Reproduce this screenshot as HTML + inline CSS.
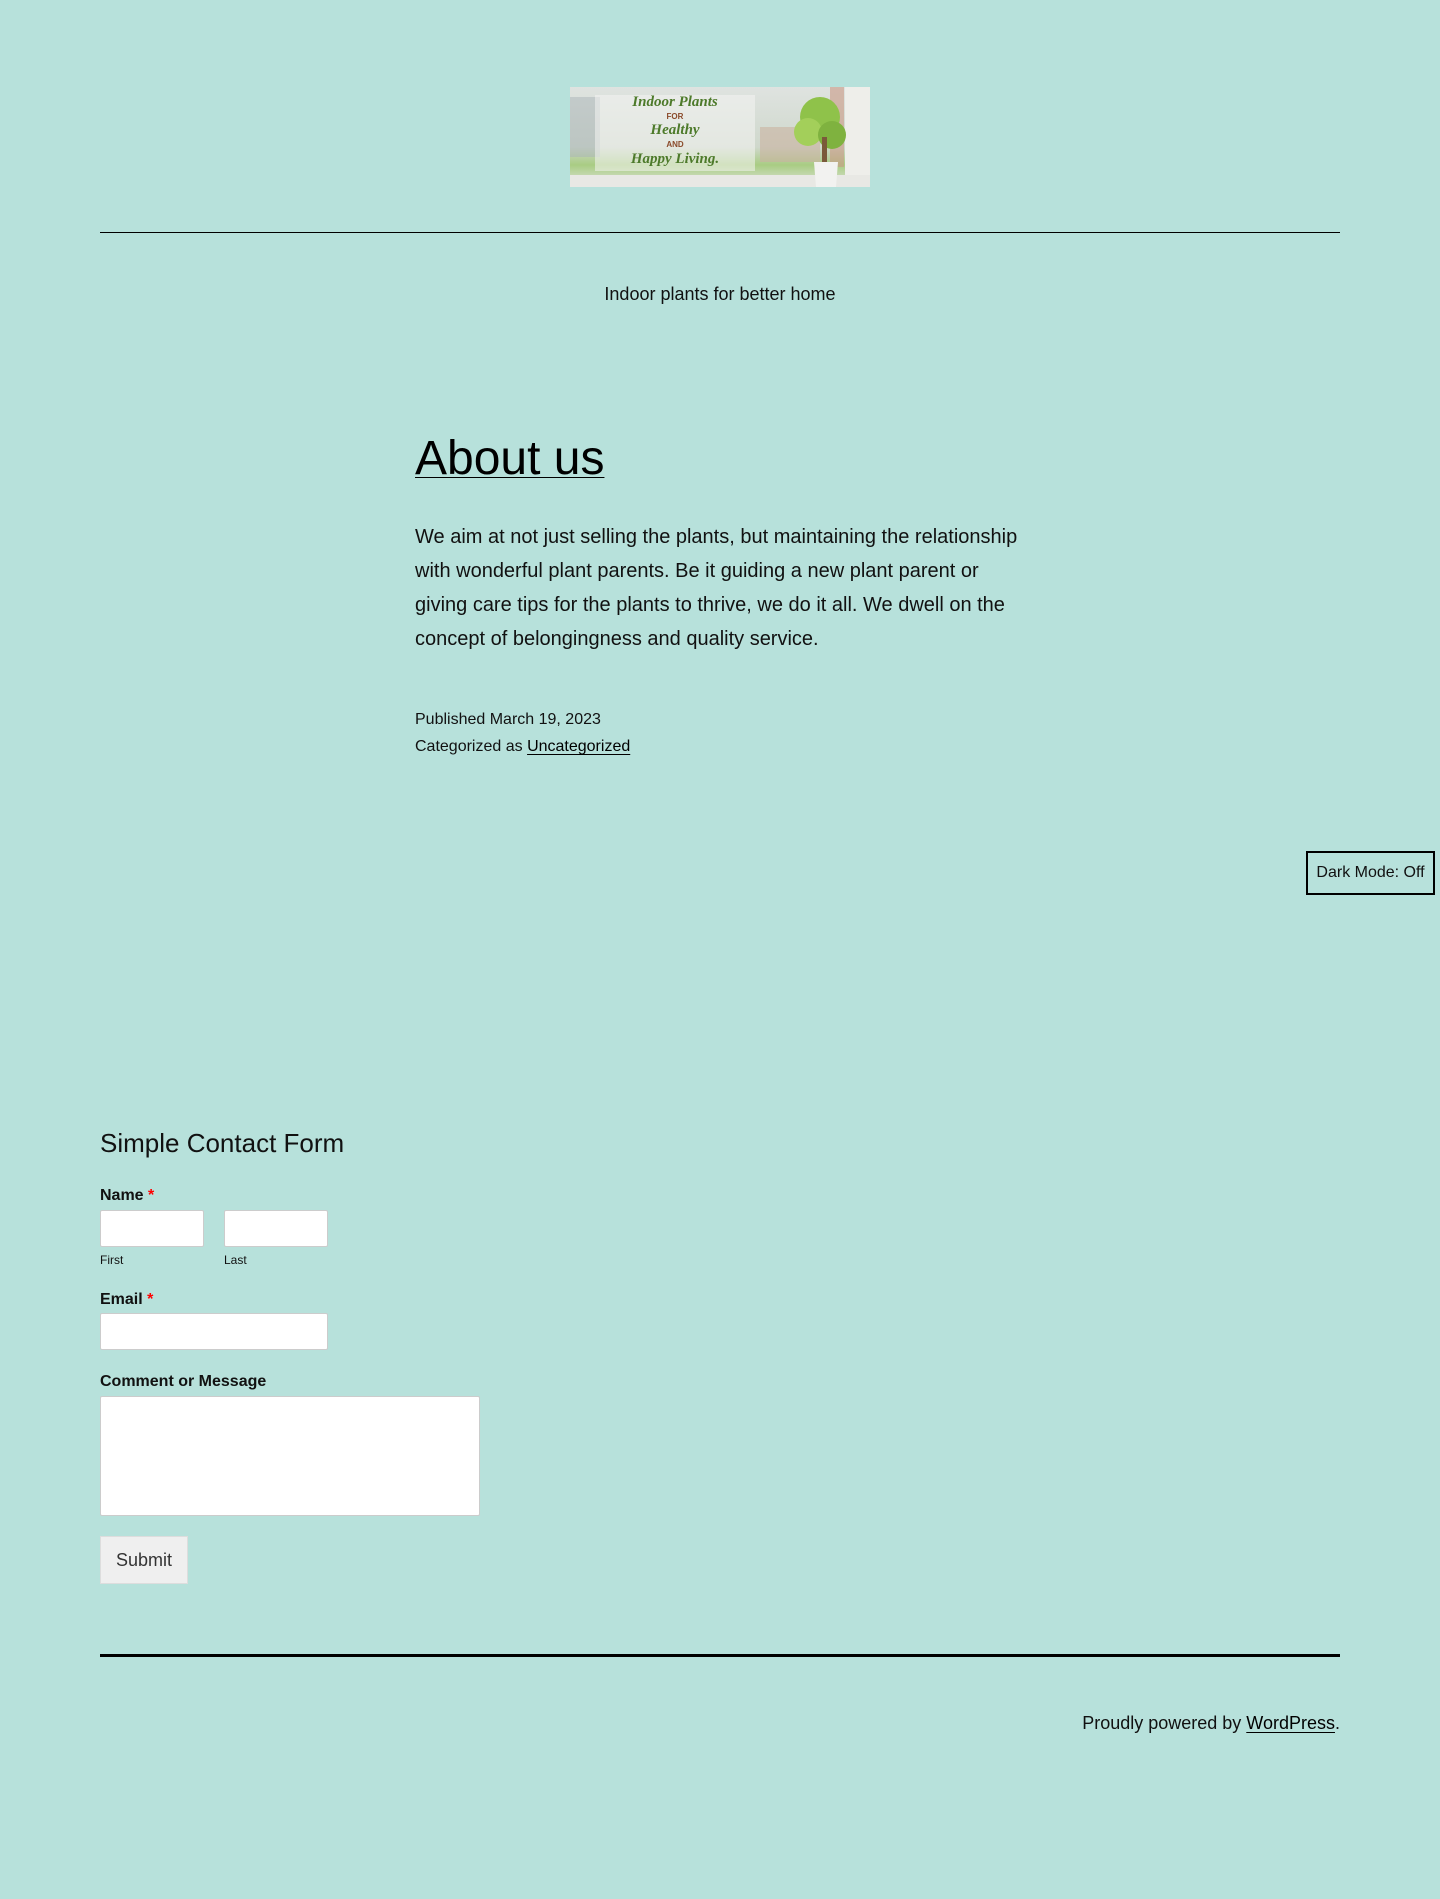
<!DOCTYPE html>
<html><head><meta charset="utf-8"><style>
*{margin:0;padding:0;box-sizing:border-box}
html,body{width:1440px;height:1899px;background:#b7e1db;font-family:"Liberation Sans",Arial,sans-serif;color:#000;overflow:hidden}
.a{position:absolute;white-space:nowrap}
a{color:#000;text-decoration:underline;text-decoration-thickness:1px;text-underline-offset:3px}
.inp{position:absolute;background:#fff;border:1px solid #ccc;border-radius:2px}
.lbl{position:absolute;font-weight:bold;font-size:16px;line-height:20px;color:#111}
.lbl span{color:#f00}
</style></head><body>
<svg class="a" style="left:570px;top:87px" width="300" height="100" viewBox="0 0 300 100">
<defs><linearGradient id="g" x1="0" y1="0" x2="0" y2="1"><stop offset="0" stop-color="#dfe3e0"/><stop offset=".6" stop-color="#cfd8cc"/><stop offset=".78" stop-color="#a9cc83"/><stop offset="1" stop-color="#e2e6e0"/></linearGradient></defs>
<rect width="300" height="100" fill="url(#g)"/>
<rect x="0" y="10" width="30" height="60" fill="#aab4b8" opacity=".5"/>
<rect x="190" y="40" width="60" height="35" fill="#c9b3a0" opacity=".6"/>
<rect x="275" y="0" width="25" height="95" fill="#eeeeea"/>
<rect x="260" y="0" width="14" height="80" fill="#c99a86" opacity=".6"/>
<rect x="25" y="8" width="160" height="76" fill="#f4f4f2" opacity=".55"/>
<rect x="0" y="88" width="300" height="12" fill="#e8e8e4"/>
<circle cx="250" cy="30" r="20" fill="#8fc24a"/><circle cx="238" cy="45" r="14" fill="#a3cf5a"/><circle cx="262" cy="48" r="14" fill="#7fb23f"/>
<rect x="252" y="50" width="5" height="25" fill="#7a5a3a"/>
<path d="M244 75h24l-2 25h-20z" fill="#f2f2f0"/>
<text x="105" y="19" text-anchor="middle" font-family="Liberation Serif" font-style="italic" font-weight="bold" font-size="15" fill="#4d7a2a">Indoor Plants</text>
<text x="105" y="32" text-anchor="middle" font-family="Liberation Sans" font-weight="bold" font-size="8" fill="#8a4a2a">FOR</text>
<text x="105" y="47" text-anchor="middle" font-family="Liberation Serif" font-style="italic" font-weight="bold" font-size="15" fill="#4d7a2a">Healthy</text>
<text x="105" y="60" text-anchor="middle" font-family="Liberation Sans" font-weight="bold" font-size="8" fill="#8a4a2a">AND</text>
<text x="105" y="76" text-anchor="middle" font-family="Liberation Serif" font-style="italic" font-weight="bold" font-size="15" fill="#4d7a2a">Happy Living.</text>
</svg>
<div class="a" style="left:100px;top:232px;width:1240px;height:1px;background:#000"></div>
<div class="a" style="left:0;width:1440px;text-align:center;top:283px;font-size:18px;line-height:22px;color:#111">Indoor plants for better home</div>
<div class="a" style="left:415px;top:431px;font-size:48px;line-height:56px"><a href="#">About us</a></div>
<div class="a" style="left:415px;top:520px;width:620px;white-space:normal;font-size:20px;line-height:34px;color:#111">We aim at not just selling the plants, but maintaining the relationship with wonderful plant parents. Be it guiding a new plant parent or giving care tips for the plants to thrive, we do it all. We dwell on the concept of belongingness and quality service.</div>
<div class="a" style="left:415px;top:706px;font-size:16px;line-height:27px;color:#111">Published March 19, 2023<br>Categorized as <a href="#">Uncategorized</a></div>
<div class="a" style="left:1306px;top:851px;width:129px;height:44px;border:2px solid #000;font-size:16px;line-height:40px;text-align:center;color:#111">Dark Mode: Off</div>
<div class="a" style="left:100px;top:1127px;font-size:26px;line-height:32px;color:#111">Simple Contact Form</div>
<div class="lbl" style="left:100px;top:1186px">Name <span>*</span></div>
<div class="inp" style="left:100px;top:1210px;width:104px;height:37px"></div>
<div class="inp" style="left:224px;top:1210px;width:104px;height:37px"></div>
<div class="a" style="left:100px;top:1253px;font-size:12px;line-height:14px;color:#111">First</div>
<div class="a" style="left:224px;top:1253px;font-size:12px;line-height:14px;color:#111">Last</div>
<div class="lbl" style="left:100px;top:1290px">Email <span>*</span></div>
<div class="inp" style="left:100px;top:1313px;width:228px;height:37px"></div>
<div class="lbl" style="left:100px;top:1372px">Comment or Message</div>
<div class="inp" style="left:100px;top:1396px;width:380px;height:120px"></div>
<div class="a" style="left:100px;top:1536px;width:88px;height:48px;background:#efefef;border:1px solid #ddd;font-size:18px;line-height:46px;text-align:center;color:#333">Submit</div>
<div class="a" style="left:100px;top:1654px;width:1240px;height:3px;background:#000"></div>
<div class="a" style="right:100px;top:1712px;font-size:18px;line-height:22px;color:#111">Proudly powered by <a href="#">WordPress</a>.</div>
</body></html>
